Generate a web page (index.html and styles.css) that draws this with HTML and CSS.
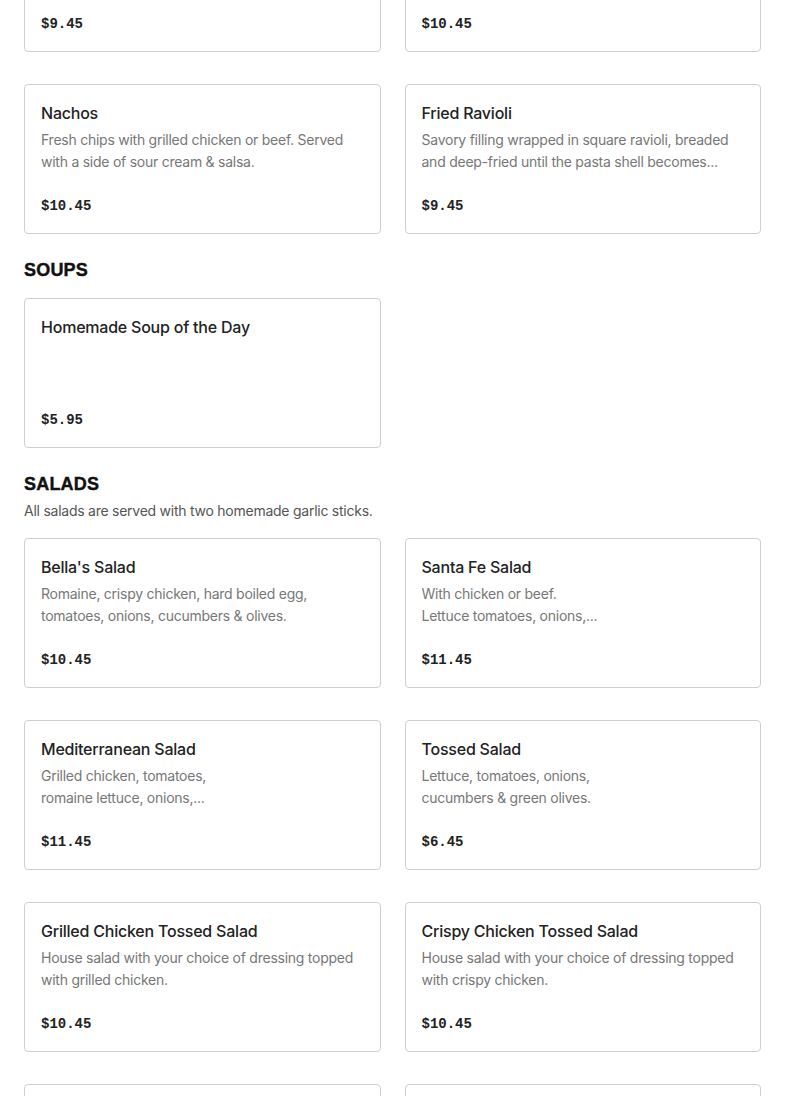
FILE: index.html
```html
<!DOCTYPE html>
<html lang="en">
<head>
<meta charset="utf-8">
<title>Menu</title>
<link rel="stylesheet" href="styles.css">
</head>
<body>
<main class="menu">
  <section class="section">
    <div class="grid">
      <article class="card">
        <h3 class="card-title">Mozzarella Sticks</h3>
        <p class="card-desc">Breaded mozzarella served with marinara sauce.</p>
        <div class="card-price">$9.45</div>
      </article>
      <article class="card">
        <h3 class="card-title">Chicken Wings</h3>
        <p class="card-desc">Served with celery and blue cheese dressing.</p>
        <div class="card-price">$10.45</div>
      </article>
      <article class="card">
        <h3 class="card-title">Nachos</h3>
        <p class="card-desc">Fresh chips with grilled chicken or beef. Served with a side of sour cream &amp; salsa.</p>
        <div class="card-price">$10.45</div>
      </article>
      <article class="card">
        <h3 class="card-title">Fried Ravioli</h3>
        <p class="card-desc">Savory filling wrapped in square ravioli, breaded and deep-fried until the pasta shell becomes...</p>
        <div class="card-price">$9.45</div>
      </article>
    </div>
  </section>

  <section class="section">
    <h2 class="section-title">SOUPS</h2>
    <div class="grid">
      <article class="card">
        <h3 class="card-title">Homemade Soup of the Day</h3>
        <div class="card-price">$5.95</div>
      </article>
    </div>
  </section>

  <section class="section">
    <h2 class="section-title">SALADS</h2>
    <p class="section-note">All salads are served with two homemade garlic sticks.</p>
    <div class="grid">
      <article class="card">
        <h3 class="card-title">Bella's Salad</h3>
        <p class="card-desc">Romaine, crispy chicken, hard boiled egg,
tomatoes, onions, cucumbers &amp; olives.</p>
        <div class="card-price">$10.45</div>
      </article>
      <article class="card">
        <h3 class="card-title">Santa Fe Salad</h3>
        <p class="card-desc">With chicken or beef.
Lettuce tomatoes, onions,...</p>
        <div class="card-price">$11.45</div>
      </article>
      <article class="card">
        <h3 class="card-title">Mediterranean Salad</h3>
        <p class="card-desc">Grilled chicken, tomatoes,
romaine lettuce, onions,...</p>
        <div class="card-price">$11.45</div>
      </article>
      <article class="card">
        <h3 class="card-title">Tossed Salad</h3>
        <p class="card-desc">Lettuce, tomatoes, onions,
cucumbers &amp; green olives.</p>
        <div class="card-price">$6.45</div>
      </article>
      <article class="card">
        <h3 class="card-title">Grilled Chicken Tossed Salad</h3>
        <p class="card-desc">House salad with your choice of dressing topped with grilled chicken.</p>
        <div class="card-price">$10.45</div>
      </article>
      <article class="card">
        <h3 class="card-title">Crispy Chicken Tossed Salad</h3>
        <p class="card-desc">House salad with your choice of dressing topped with crispy chicken.</p>
        <div class="card-price">$10.45</div>
      </article>
      <article class="card">
        <h3 class="card-title">Chef Salad</h3>
        <p class="card-desc">Ham, turkey, cheese, egg and fresh vegetables.</p>
        <div class="card-price">$11.45</div>
      </article>
      <article class="card">
        <h3 class="card-title">Greek Salad</h3>
        <p class="card-desc">Feta, olives, tomatoes, onions and cucumbers.</p>
        <div class="card-price">$10.45</div>
      </article>
    </div>
  </section>
</main>
</body>
</html>
```

FILE: styles.css
```css
html, body {
  margin: 0;
  padding: 0;
  background: #ffffff;
}

body {
  font-family: Inter, "Liberation Sans", Arial, sans-serif;
  color: #222222;
  overflow: hidden;
}

.menu {
  margin-top: -98px;
  padding: 0 24px;
}

.section {
  margin-bottom: 24px;
}

.section-title {
  margin: 0 0 16px;
  font-family: "Liberation Sans", Arial, sans-serif;
  font-weight: 900;
  font-size: 18px;
  line-height: 24px;
  color: #111111;
  letter-spacing: 0.2px;
  -webkit-text-stroke: 0.4px #111111;
}

.section-note {
  margin: -12px 0 16px;
  font-size: 14px;
  line-height: 22px;
  letter-spacing: -0.25px;
  color: #555555;
}

.grid {
  display: grid;
  grid-template-columns: 1fr 1fr;
  column-gap: 24px;
  row-gap: 32px;
}

.card {
  box-sizing: border-box;
  height: 150px;
  border: 1px solid #cfcfcf;
  border-radius: 4px;
  padding: 16px;
  display: flex;
  flex-direction: column;
}

.card-title {
  margin: 0 0 4px;
  font-size: 16px;
  line-height: 24px;
  letter-spacing: -0.22px;
  font-weight: 500;
  color: #222222;
}

.card-desc {
  margin: 0;
  font-size: 14px;
  line-height: 22px;
  letter-spacing: -0.25px;
  color: #777777;
  white-space: pre-line;
  display: -webkit-box;
  -webkit-line-clamp: 2;
  -webkit-box-orient: vertical;
  overflow: hidden;
}

.card-price {
  margin-top: auto;
  padding-top: 1px;
  font-family: "Liberation Mono", "Courier New", monospace;
  font-weight: 700;
  font-size: 14px;
  line-height: 22px;
  color: #222222;
}
```
